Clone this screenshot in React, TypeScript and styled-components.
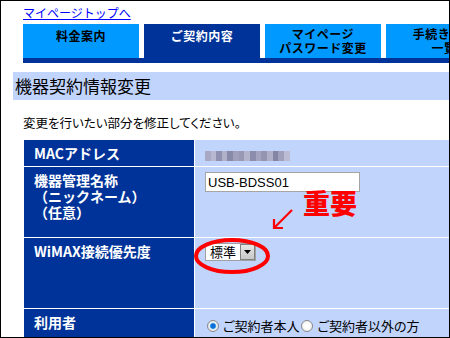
import styled, { createGlobalStyle } from "styled-components"

const GlobalStyle = createGlobalStyle`
  body {
    margin: 0;
    background: #fff;
    font-family: "Noto Sans CJK JP", "Noto Sans", sans-serif;
  }
`

const NAVY = "#003399"
const SKY = "#0099ff"
const PALE = "#c0d4fc"

const Frame = styled.div`
  position: relative;
  width: 450px;
  height: 338px;
  box-sizing: border-box;
  border: 1px solid #000;
  overflow: hidden;
  background: #fff;
  line-height: 16px;
`

const Content = styled.div`
  padding: 4px 0 0 22px;
`

const TopLink = styled.a`
  display: block;
  width: fit-content;
  font-size: 12px;
  line-height: 15px;
  color: #0000ff;
  text-decoration: underline;
`

const Nav = styled.div`
  margin-top: 4px;
`

const TabRow = styled.div`
  display: flex;
  gap: 5px;
  height: 34px;
`

const Tab = styled.div<{ $active?: boolean; $twoLine?: boolean }>`
  flex: 0 0 116px;
  box-sizing: border-box;
  padding-top: ${({ $twoLine }) => ($twoLine ? "3px" : "5px")};
  background: ${({ $active }) => ($active ? NAVY : SKY)};
  color: ${({ $active }) => ($active ? "#fff" : "#000")};
  font-size: 12px;
  font-weight: 700;
  line-height: 14px;
  text-align: center;
  white-space: nowrap;
  letter-spacing: 0.5px;
`

const NavBar = styled.div`
  height: 5px;
  background: ${NAVY};
`

const SectionTitle = styled.h2`
  margin: 9px 0 0 -10px;
  height: 28px;
  padding-left: 2px;
  background: ${PALE};
  font-size: 17px;
  font-weight: 400;
  line-height: 28px;
  color: #000;
`

const Lead = styled.p`
  margin: 15px 0 0 0;
  font-size: 12.5px;
  line-height: 16px;
  color: #000;
  font-feature-settings: "palt";
`

const FormTable = styled.div`
  margin: 9px 0 0 1px;
  display: grid;
  grid-template-columns: 170px 1fr;
  grid-template-rows: 26px 70px 70px 40px;
  gap: 1px;
  background: #fff;
`

const LabelCell = styled.div`
  box-sizing: border-box;
  padding: 5px 10px;
  background: ${NAVY};
  color: #fff;
  font-size: 14px;
  font-weight: 700;
  line-height: 16px;
  white-space: nowrap;
`

const ValueCell = styled.div<{ $padTop?: number }>`
  position: relative;
  box-sizing: border-box;
  padding: ${({ $padTop }) => $padTop ?? 5}px 10px 0;
  background: ${PALE};
  font-size: 13px;
  line-height: 16px;
  white-space: nowrap;
`

const Blurred = styled.div`
  display: flex;
  margin-top: 6px;
  filter: blur(0.6px);
`

const Pixel = styled.span<{ $c: string; $w: number }>`
  display: block;
  width: ${({ $w }) => $w}px;
  height: 10px;
  background: ${({ $c }) => $c};
`

const TextInput = styled.input`
  display: block;
  box-sizing: border-box;
  width: 155px;
  height: 20px;
  padding: 0 2px;
  border: 1px solid #a5a5a5;
  background: #fff;
  font-family: "Liberation Sans", Arial, sans-serif;
  font-size: 13px;
  color: #000;
  outline: none;
`

const SelectBox = styled.div`
  display: inline-flex;
  align-items: stretch;
  height: 18px;
  box-sizing: border-box;
  border: 1px solid #a0a0a0;
  background: #fff;
  font-size: 13px;
  line-height: 16px;
`

const SelectText = styled.span`
  padding: 0 4px 0 4px;
`

const SelectButton = styled.span`
  display: flex;
  align-items: center;
  justify-content: center;
  width: 15px;
  box-sizing: border-box;
  border: 1px solid #808080;
  background: linear-gradient(#e6e6e6, #c8c8c8);
`

const Note = styled.span`
  position: absolute;
  left: 108px;
  top: 22px;
  font-size: 27px;
  font-weight: 900;
  line-height: 1;
  color: #ff0000;
  letter-spacing: 0;
`

const ArrowMark = styled.svg`
  position: absolute;
  left: 76px;
  top: 40px;
`

const Circle = styled.svg`
  position: absolute;
  left: -2px;
  top: -1px;
  pointer-events: none;
`

const RadioGroup = styled.div`
  display: flex;
  align-items: center;
  font-size: 13px;
  line-height: 18px;
  font-feature-settings: "palt";
`

const RadioDot = styled.span<{ $checked?: boolean }>`
  display: inline-block;
  width: 12px;
  height: 12px;
  box-sizing: border-box;
  margin: 0 4px 0 2px;
  border-radius: 50%;
  border: 1px solid #8a8a8a;
  background: ${({ $checked }) =>
    $checked
      ? "radial-gradient(circle, #0c6fd8 0 2px, #2a8fe6 2.5px, #e8eef6 3.5px, #dcdcdc 100%)"
      : "radial-gradient(circle, #ffffff 0 2px, #e4e4e4 100%)"};
`

const macBlocks: [string, number][] = [
  ["#a8a8c4", 6], ["#b8b8d0", 5], ["#9090b0", 6], ["#b0b0c8", 5],
  ["#8888a8", 6], ["#a0a0bc", 6], ["#9898b4", 5], ["#b4b4cc", 6],
  ["#8c8cac", 6], ["#a4a4c0", 5], ["#9494b0", 6], ["#b0b0c8", 6],
  ["#8484a4", 5], ["#a0a0bc", 6], ["#bcbcd4", 6],
]

export default function App() {
  return (
    <>
      <GlobalStyle />
      <Frame>
        <Content>
          <TopLink href="#">マイページトップへ</TopLink>

          <Nav>
            <TabRow>
              <Tab>料金案内</Tab>
              <Tab $active>ご契約内容</Tab>
              <Tab $twoLine>
                マイページ
                <br />
                パスワード変更
              </Tab>
              <Tab $twoLine>
                手続き状況
                <br />
                一覧
              </Tab>
            </TabRow>
            <NavBar />
          </Nav>

          <SectionTitle>機器契約情報変更</SectionTitle>
          <Lead>変更を行いたい部分を修正してください。</Lead>

          <FormTable>
            <LabelCell>MACアドレス</LabelCell>
            <ValueCell>
              <Blurred>
                {macBlocks.map(([c, w], i) => (
                  <Pixel key={i} $c={c} $w={w} />
                ))}
              </Blurred>
            </ValueCell>

            <LabelCell>
              機器管理名称
              <br />
              （ニックネーム）
              <br />
              （任意）
            </LabelCell>
            <ValueCell>
              <TextInput readOnly value="USB-BDSS01" />
              <Note>重要</Note>
              <ArrowMark width="24" height="24" viewBox="0 0 24 24" aria-hidden="true">
                <path d="M21 3 L4 20" stroke="#ff0000" strokeWidth="2.2" fill="none" />
                <path d="M3 12 L3 21 L12 21" stroke="#ff0000" strokeWidth="2.2" fill="none" />
              </ArrowMark>
            </ValueCell>

            <LabelCell>WiMAX接続優先度</LabelCell>
            <ValueCell>
              <SelectBox>
                <SelectText>標準</SelectText>
                <SelectButton>
                  <svg width="7" height="4" viewBox="0 0 7 4" aria-hidden="true">
                    <path d="M0 0 H7 L3.5 4 Z" fill="#000" />
                  </svg>
                </SelectButton>
              </SelectBox>
              <Circle width="78" height="38" viewBox="0 0 78 38" aria-hidden="true">
                <ellipse cx="39" cy="19" rx="36" ry="16" stroke="#ff0000" strokeWidth="4" fill="none" />
              </Circle>
            </ValueCell>

            <LabelCell>利用者</LabelCell>
            <ValueCell $padTop={8}>
              <RadioGroup>
                <RadioDot $checked />
                ご契約者本人
                <RadioDot />
                ご契約者以外の方
              </RadioGroup>
            </ValueCell>
          </FormTable>
        </Content>
      </Frame>
    </>
  )
}
